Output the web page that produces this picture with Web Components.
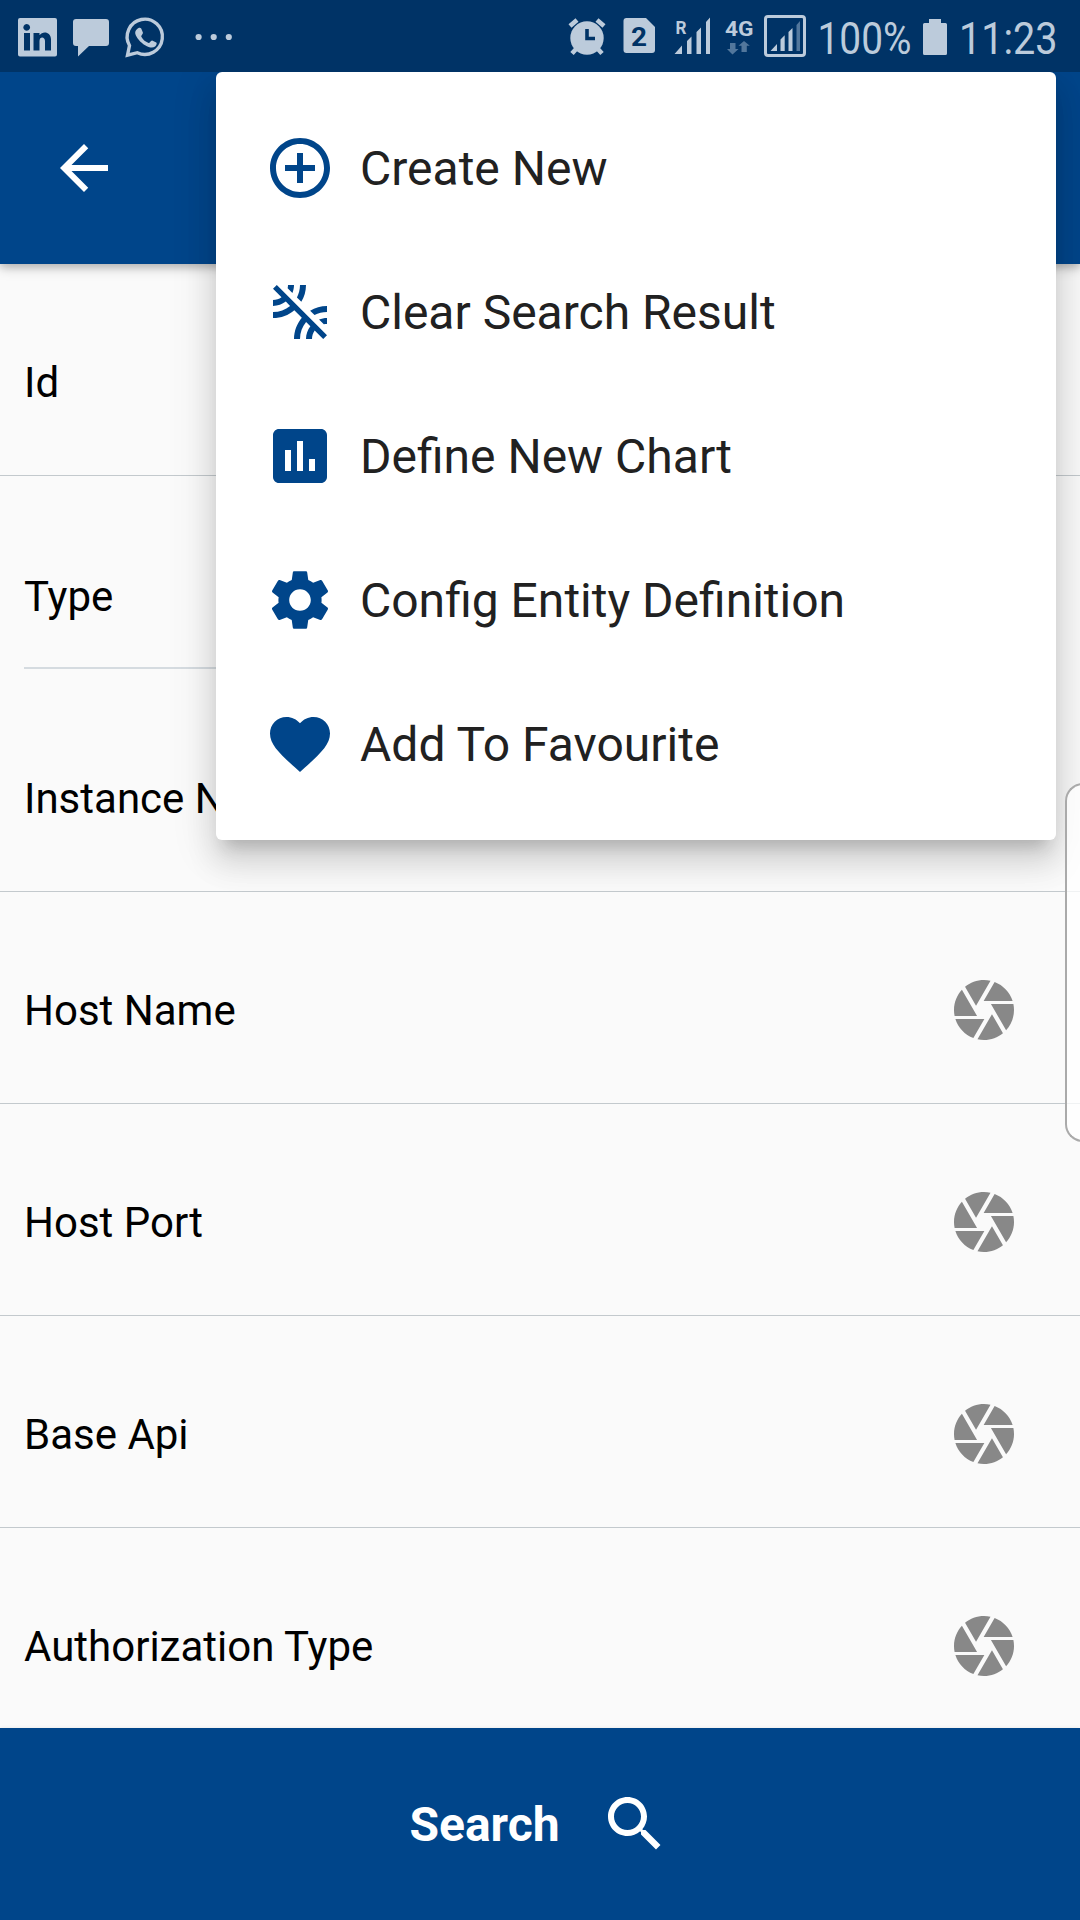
<!DOCTYPE html>
<html lang="en"><head><meta charset="utf-8"><title>Search</title>
<style>html,body{margin:0;padding:0}body{width:1080px;height:1920px;overflow:hidden;font-family:Roboto,"Noto Sans",sans-serif}</style></head>
<body><entity-screen></entity-screen>
<script>
const define=(name,html)=>{
  const t=document.createElement('template');t.innerHTML=html;
  customElements.define(name,class extends HTMLElement{
    constructor(){super();this.attachShadow({mode:'open'}).append(t.content.cloneNode(true));}
  });
};
const ICONS={
 back:'M20 11H7.83l5.59-5.59L12 4l-8 8 8 8 1.41-1.41L7.83 13H20v-2z',
 add:'M13 7h-2v4H7v2h4v4h2v-4h4v-2h-4V7zm-1-5C6.48 2 2 6.48 2 12s4.48 10 10 10 10-4.48 10-10S17.52 2 12 2zm0 18c-4.41 0-8-3.59-8-8s3.59-8 8-8 8 3.59 8 8-3.59 8-8 8z',
 leak:'M10 3H8c0 .37-.04.72-.12 1.06l1.59 1.59C9.81 4.84 10 3.94 10 3zM3 4.27l2.84 2.84C5.03 7.67 4.06 8 3 8v2c1.61 0 3.09-.55 4.27-1.46L8.7 9.97C7.14 11.24 5.16 12 3 12v2c2.71 0 5.19-.99 7.11-2.62l2.5 2.5C10.99 15.81 10 18.29 10 21h2c0-2.16.76-4.14 2.03-5.69l1.43 1.43C14.55 17.91 14 19.39 14 21h2c0-1.06.33-2.03.89-2.84L19.73 21 21 19.73 4.27 3 3 4.27zM14 3h-2c0 1.5-.37 2.91-1.02 4.16l1.46 1.46C13.42 6.98 14 5.06 14 3zm5.94 13.12c.34-.08.69-.12 1.06-.12v-2c-.94 0-1.84.19-2.66.52l1.6 1.6zm-4.56-4.56l1.46 1.46C18.09 12.37 19.5 12 21 12v-2c-2.06 0-3.98.58-5.62 1.56z',
 chart:'M19 3H5c-1.1 0-2 .9-2 2v14c0 1.1.9 2 2 2h14c1.1 0 2-.9 2-2V5c0-1.1-.9-2-2-2zM9 17H7v-7h2v7zm4 0h-2V7h2v10zm4 0h-2v-4h2v4z',
 gear:'M19.14 12.94c.04-.3.06-.61.06-.94 0-.32-.02-.64-.07-.94l2.03-1.58c.18-.14.23-.41.12-.61l-1.92-3.32c-.12-.22-.37-.29-.59-.22l-2.39.96c-.5-.38-1.03-.7-1.62-.94l-.36-2.54c-.04-.24-.24-.41-.48-.41h-3.84c-.24 0-.43.17-.47.41l-.36 2.54c-.59.24-1.13.57-1.62.94l-2.39-.96c-.22-.08-.47 0-.59.22L2.74 8.87c-.12.21-.08.47.12.61l2.03 1.58c-.05.3-.09.63-.09.94s.02.64.07.94l-2.03 1.58c-.18.14-.23.41-.12.61l1.92 3.32c.12.22.37.29.59.22l2.39-.96c.5.38 1.03.7 1.62.94l.36 2.54c.05.24.24.41.48.41h3.84c.24 0 .44-.17.47-.41l.36-2.54c.59-.24 1.13-.56 1.62-.94l2.39.96c.22.08.47 0 .59-.22l1.92-3.32c.12-.22.07-.47-.12-.61l-2.01-1.58zM12 15.6c-1.98 0-3.6-1.62-3.6-3.6s1.62-3.6 3.6-3.6 3.6 1.62 3.6 3.6-1.62 3.6-3.6 3.6z',
 heart:'M12 21.35l-1.45-1.32C5.4 15.36 2 12.28 2 8.5 2 5.42 4.42 3 7.5 3c1.74 0 3.41.81 4.5 2.09C13.09 3.81 14.76 3 16.5 3 19.58 3 22 5.42 22 8.5c0 3.78-3.4 6.86-8.55 11.54L12 21.35z',
 camera:'M9.4 10.5l4.77-8.26C13.47 2.09 12.75 2 12 2c-2.4 0-4.6.85-6.32 2.25l3.66 6.35.06-.1zM21.54 9c-.92-2.92-3.15-5.26-6-6.34L11.88 9h9.66zm.26 1h-7.49l.29.5 4.76 8.25C21 16.97 22 14.61 22 12c0-.69-.07-1.35-.2-2zM8.54 12l-3.9-6.75C3.01 7.03 2 9.39 2 12c0 .69.07 1.35.2 2h7.49l-1.15-2zm-6.08 3c.92 2.92 3.15 5.26 6 6.34L12.12 15H2.46zm11.27 0l-3.9 6.76c.7.15 1.42.24 2.17.24 2.4 0 4.6-.85 6.32-2.25l-3.66-6.35-.93 1.6z',
 search:'M15.5 14h-.79l-.28-.27C15.41 12.59 16 11.11 16 9.5 16 5.91 13.09 3 9.5 3S3 5.91 3 9.5 5.91 16 9.5 16c1.61 0 3.09-.59 4.23-1.57l.27.28v.79l5 4.99L20.49 19l-4.99-5zm-6 0C7.01 14 5 11.99 5 9.5S7.01 5 9.5 5 14 7.01 14 9.5 11.99 14 9.5 14z'
};
customElements.define('md-icon',class extends HTMLElement{
  connectedCallback(){
    if(this.shadowRoot)return;
    this.attachShadow({mode:'open'}).innerHTML=`<style>:host{display:block;flex:none;width:72px;height:72px}svg{display:block}</style><svg width="72" height="72" viewBox="0 0 24 24" fill="currentColor"><path d="${ICONS[this.getAttribute('name')]}"/></svg>`;
  }
});
define('status-bar',`<style>
:host{display:flex;height:72px;background:#003366;color:#bccbdb;justify-content:space-between}
svg{display:block;flex:none}
text{font-family:Roboto,sans-serif;fill:#bccbdb}
</style>
<svg width="260" height="72" viewBox="0 0 260 72" fill="#bccbdb">
 <path fill-rule="evenodd" d="M20 18h35q2 0 2 2v34.500q0 2-2 2H20q-2 0-2-2V20q0-2 2-2zM26.700 24a3.400 3.400 0 1 0 .01 0zM24 33h6v17.500h-6zM33.500 33v17.500h6V41c0-5 5.500-4.500 5.500 0v9.500h6V39.500c0-8-8.500-9-11.500-4.200V33z"/>
 <path d="M76 19h30q3 0 3 3v21q0 3-3 3H89L78 56.500V46h-2q-3 0-3-3V22q0-3 3-3z"/>
 <path d="M129.500 45.500A17.600 17.600 0 1 1 137.300 52.700L127.500 55.200Z" fill="none" stroke="#bccbdb" stroke-width="3.400"/>
 <path d="M138.500 28c1-.6 2.200-.4 2.700.6l1.700 4c.4 1.200-1.700 3-1.700 3.800 1.500 3 4 5.200 7.400 6.500 1 .3 2.300-2.700 3.500-2.500l4.200 2.100c1 .6.100 3-1.200 4-2.500 2-6.200 1-10-1.300-4.500-2.700-9.100-7.700-9.900-12-.3-2 1.300-4.300 3.300-5.200z"/>
 <circle cx="198.600" cy="37" r="3.100"/><circle cx="213.700" cy="37" r="3.100"/><circle cx="228.800" cy="37" r="3.100"/>
</svg>
<svg width="520" height="72" viewBox="560 0 520 72" fill="#bccbdb">
 <g stroke="#bccbdb" stroke-width="4.600"><path d="M570 26l7-6M597 20l7 6M577 48l-5 5.500M597 48l5 5.500"/></g>
 <circle cx="587" cy="38" r="16.700"/><path d="M587 29v9.500h8" fill="none" stroke="#003366" stroke-width="3.600"/>
 <path d="M626.500 18H646l9 9v23q0 3-3 3h-25.500q-3 0-3-3V21q0-3 3-3z"/>
 <text x="631" y="46" textLength="16" lengthAdjust="spacingAndGlyphs" style="font-size:26px;font-weight:700;fill:#003366">2</text>
 <text x="675.500" y="33.500" textLength="11" lengthAdjust="spacingAndGlyphs" style="font-size:18px;font-weight:700">R</text>
 <path d="M674.500 54l7.500-8.500V54zM687 54V41l4.500-4.500V54zM696.500 54V32l4.500-4.500V54zM706 54V22l4-4.500V54z"/>
 <text x="725" y="35.500" textLength="28.500" lengthAdjust="spacingAndGlyphs" style="font-size:21px;font-weight:700">4G</text>
 <path d="M730 43h5.500v6h3L732.500 54.500 727 49h3zM741.500 52v-6.200h-3L744 41l5.800 4.800h-3V52z" fill="#52779c"/>
 <rect x="765.500" y="16.500" width="39" height="39" rx="2.500" fill="none" stroke="#bccbdb" stroke-width="3"/>
 <path d="M770.500 51l6.500-7v7zM780.500 51V39.500l4.200-4.200V51zM788.500 51V32l4-4v23z"/><path d="M796.500 51V25l3.500-4v30z" fill="#52779c"/>
 <text x="817.500" y="53.500" textLength="94" lengthAdjust="spacingAndGlyphs" style="font-size:45px">100%</text>
 <path d="M929 19h12v4h4.500q1.500 0 1.500 1.500v29q0 1.500-1.500 1.500h-21q-1.500 0-1.500-1.500v-29q0-1.500 1.500-1.500h4.500z"/>
 <text x="959" y="53.500" textLength="98.500" lengthAdjust="spacingAndGlyphs" style="font-size:45px">11:23</text>
</svg>`);
define('app-bar',`<style>:host{display:flex;align-items:center;box-sizing:border-box;height:192px;padding-left:48px;background:#00458a;color:#fff;position:relative;box-shadow:0 3px 12px rgba(0,0,0,.26),0 4px 6px rgba(0,0,0,.08)}</style><slot></slot>`);
define('field-row',`<style>
:host{display:flex;box-sizing:border-box;height:212px;padding:24px 60px 0 24px;align-items:center;justify-content:space-between;border-bottom:1px solid #c3c9cd;font-size:42px;line-height:49px;color:#000;white-space:nowrap}
:host([inset]){height:193px;margin:0 24px 11px;padding:49px 36px 0 0;border-bottom:2px solid #d5dbe0}
span{padding-top:2px}:host([inset]) span{padding-top:0}
</style><span><slot></slot></span><slot name="action"></slot>`);
define('popup-menu',`<style>:host{display:block;box-sizing:border-box;width:840px;height:768px;padding:24px 0;background:#fff;border-radius:6px;position:absolute;left:216px;top:72px;z-index:3;box-shadow:0 15px 15px -9px rgba(0,0,0,.17),0 24px 30px 3px rgba(0,0,0,.09),0 9px 42px 6px rgba(0,0,0,.1)}</style><slot></slot>`);
define('menu-item',`<style>:host{display:flex;height:144px;padding-left:48px;align-items:center;gap:24px;color:#00458a}
span{padding-top:2px;font-size:48px;line-height:56px;color:#212121;white-space:nowrap}</style><slot name="icon"></slot><span><slot></slot></span>`);
define('search-button',`<style>:host{display:flex;height:192px;flex:none;align-items:center;justify-content:center;gap:39px;background:#00458a;color:#fff;font-size:48px;font-weight:700;position:relative;box-shadow:0 0 4px rgba(0,0,0,.08)}
</style><span><slot></slot></span><md-icon name="search"></md-icon>`);
define('edge-panel',`<style>:host{display:block;box-sizing:border-box;width:20px;height:359px;position:absolute;left:1065px;top:783px;z-index:4;border:2px solid #aaa;border-radius:18px 0 0 18px;border-right:0;background:rgba(255,255,255,.75)}</style>`);
define('entity-screen',`<style>
:host{display:flex;flex-direction:column;width:1080px;height:1920px;position:relative;overflow:hidden;background:#fafafa}
status-bar{position:relative;z-index:5;flex:none}app-bar{flex:none;z-index:1}
main{flex:1;min-height:0;overflow:hidden}
md-icon[slot=action]{color:#888;padding-top:1px}
</style>
<status-bar></status-bar>
<app-bar><md-icon name="back"></md-icon></app-bar>
<main>
<field-row>Id</field-row><field-row inset>Type</field-row><field-row>Instance Name</field-row>
<field-row>Host Name<md-icon slot="action" name="camera"></md-icon></field-row>
<field-row>Host Port<md-icon slot="action" name="camera"></md-icon></field-row>
<field-row>Base Api<md-icon slot="action" name="camera"></md-icon></field-row>
<field-row>Authorization Type<md-icon slot="action" name="camera"></md-icon></field-row>
</main>
<search-button>Search</search-button>
<popup-menu>
<menu-item><md-icon slot="icon" name="add"></md-icon>Create New</menu-item>
<menu-item><md-icon slot="icon" name="leak"></md-icon>Clear Search Result</menu-item>
<menu-item><md-icon slot="icon" name="chart"></md-icon>Define New Chart</menu-item>
<menu-item><md-icon slot="icon" name="gear"></md-icon>Config Entity Definition</menu-item>
<menu-item><md-icon slot="icon" name="heart"></md-icon>Add To Favourite</menu-item>
</popup-menu>
<edge-panel></edge-panel>`);
</script></body></html>
